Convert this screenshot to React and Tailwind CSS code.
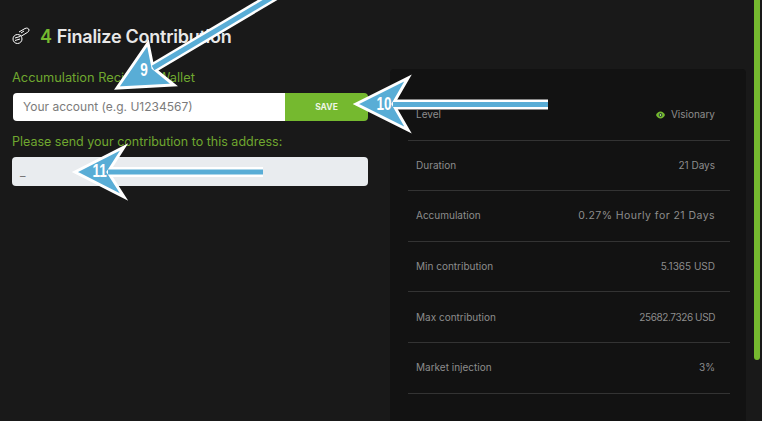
const rows = [
  ["Duration", "21 Days"],
  ["Accumulation", "0.27% Hourly for 21 Days", "text-[10.500px] tracking-[0.45px]"],
  ["Min contribution", "5.1365 USD"],
  ["Max contribution", "25682.7326 USD", "tracking-[-0.4px]"],
  ["Market injection", "3%"],
];

function Arrow({ line, points, label, labelClass }) {
  return (
    <>
      <svg className="absolute inset-0 w-full h-full" viewBox="0 0 762 421" fill="none">
        <line x1={line[0]} y1={line[1]} x2={line[2]} y2={line[3]} stroke="#fff" strokeWidth="10" />
        <polygon points={points} fill="#59add6" stroke="#fff" strokeWidth="3" />
        <line x1={line[0]} y1={line[1]} x2={line[2]} y2={line[3]} stroke="#59add6" strokeWidth="5" />
      </svg>
      <span className={labelClass}>{label}</span>
    </>
  );
}

export default function App() {
  return (
    <div className="relative w-[762px] h-[421px] overflow-hidden bg-[#191919] font-['Inter',sans-serif]">
      <div className="flex items-start">

        {/* ESQUERDA */}
        <div className="w-[390px] pl-3 pr-[22px] pt-[25px] shrink-0">
          <div className="flex items-center h-[22px]">
            <svg width="18" height="18" viewBox="0 0 18 18" fill="none" stroke="#fff" strokeWidth="1" className="shrink-0">
              <path d="M7 5l6-3.500c2-1 4 0 4 1.500s-1 2-2 2.700l-5 3c-1 .5-2 0-2-1" />
              <path d="M9 6l3-2" />
              <circle cx="5.500" cy="12" r="4.500" />
              <path d="M3 11l5-1.500M3 13.500l5-1.500" />
            </svg>
            <h2 className="ml-[10px] text-[18px] font-semibold tracking-[-0.25px] text-[#e8e8e8]">
              <span className="text-[#75b92f] mr-[5px]">4</span>Finalize Contribution
            </h2>
          </div>

          <p className="mt-[23px] text-[12.800px] leading-[16px] text-[#6fa72f]">Accumulation Recipient Wallet</p>
          <div className="flex mt-[7px] h-[28px] ml-px">
            <div className="flex-1 bg-white rounded-l-[4px] pl-[10px] flex items-center text-[12px] text-[#7b7b7b]">
              Your account (e.g. U1234567)
            </div>
            <button className="w-[83px] bg-[#75b92f] rounded-r-[4px] text-[8.500px] font-bold text-[#eef5e4]">SAVE</button>
          </div>

          <p className="mt-[13px] text-[12.500px] leading-[16px] text-[#6fa72f]">Please send your contribution to this address:</p>
          <div className="mt-[7px] h-[29px] bg-[#e9ecef] rounded-[4px] pl-[8px] flex items-center text-[12px] text-[#777]">
            _
          </div>
        </div>

        {/* DIREITA */}
        <div className="mt-[69px] w-[356px] h-[352px] bg-[#121212] rounded-t-[4px] pl-[18px] pr-4 pt-[21px] shrink-0">
          <div className="flex justify-between items-center h-[50.600px] border-b border-[#333] pl-2 pr-[15px] text-[10px] text-[#8d8d8d]">
            <span>Level</span>
            <span className="flex items-center gap-[6px]">
              <svg width="9" height="8" viewBox="0 0 9 8" className="shrink-0">
                <path d="M0 4c1-2 2.500-3.500 4.500-3.500S8 2 9 4c-1 2-2.500 3.500-4.500 3.500S1 6 0 4z" fill="#75b92f" />
                <circle cx="4.500" cy="4" r="1.800" fill="#123" />
                <circle cx="4.500" cy="4" r="0.900" fill="#bfe38a" />
              </svg>
              Visionary
            </span>
          </div>
          {rows.map(([name, value, valueClass]) => (
            <div key={name} className="flex justify-between items-center h-[50.600px] border-b border-[#333] pl-2 pr-[15px] text-[10px] text-[#8d8d8d]">
              <span>{name}</span>
              <span className={valueClass}>{value}</span>
            </div>
          ))}
        </div>

        {/* SCROLLBAR */}
        <div className="ml-2 w-[6px] h-[360px] bg-[#75b92f] rounded-b-[3px] shrink-0" />
      </div>

      {/* SETAS */}
      <Arrow
        line={[276, -5, 153, 68]}
        points="117,88 148,43 153,68 174,85"
        label="9"
        labelClass="absolute left-[139px] top-[60px] h-[20px] text-[18px] leading-[20px] font-bold text-white font-['Liberation_Sans',sans-serif] scale-x-75"
      />
      <Arrow
        line={[548, 104.500, 393, 104.500]}
        points="356,104 408,78 393,104 408,130"
        label="10"
        labelClass="absolute left-[374px] top-[94px] h-[20px] text-[18px] leading-[20px] font-bold text-white font-['Liberation_Sans',sans-serif] scale-x-75"
      />
      <Arrow
        line={[263, 172, 108, 172]}
        points="75,172 124,147 108,172 124,197"
        label="11"
        labelClass="absolute left-[90px] top-[161px] h-[20px] text-[18px] leading-[20px] font-bold text-white font-['Liberation_Sans',sans-serif] scale-x-75"
      />
    </div>
  );
}
